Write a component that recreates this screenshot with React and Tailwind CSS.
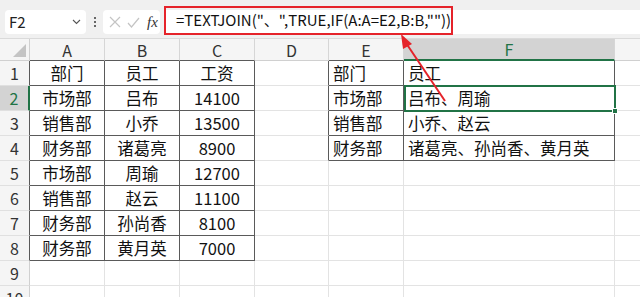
import React from 'react';

const FONT = { fontFamily: '"Noto Sans CJK SC", "Noto Sans", sans-serif' };

const cols = [
  { key: 'A', w: 'w-[75px]' },
  { key: 'B', w: 'w-[75px]' },
  { key: 'C', w: 'w-[75px]' },
  { key: 'D', w: 'w-[74px]' },
  { key: 'E', w: 'w-[75px]' },
  { key: 'F', w: 'w-[211px]' },
  { key: 'G', w: 'flex-1' },
];

// sheet contents, row -> column -> value
const data = {
  1: { A: '部门', B: '员工', C: '工资', E: '部门', F: '员工' },
  2: { A: '市场部', B: '吕布', C: '14100', E: '市场部', F: '吕布、周瑜' },
  3: { A: '销售部', B: '小乔', C: '13500', E: '销售部', F: '小乔、赵云' },
  4: { A: '财务部', B: '诸葛亮', C: '8900', E: '财务部', F: '诸葛亮、孙尚香、黄月英' },
  5: { A: '市场部', B: '周瑜', C: '12700' },
  6: { A: '销售部', B: '赵云', C: '11100' },
  7: { A: '财务部', B: '孙尚香', C: '8100' },
  8: { A: '财务部', B: '黄月英', C: '7000' },
  9: {},
  10: {},
};

const inTable = (r, c) =>
  (r <= 8 && ['A', 'B', 'C'].includes(c)) || (r <= 4 && ['E', 'F'].includes(c));

function Cell({ r, c, w }) {
  const value = data[r][c];
  const own = inTable(r, c);
  const rightDark = own || (c === 'D' && r <= 4);
  const centered = ['A', 'B', 'C'].includes(c);
  return (
    <div
      className={[
        w,
        'h-full flex items-center border-b text-[16.5px] text-[#111] whitespace-nowrap overflow-hidden',
        own ? 'border-b-[#5a5a5a]' : 'border-b-[#e3e3e3]',
        c === 'G' ? '' : 'border-r',
        rightDark ? 'border-r-[#5a5a5a]' : 'border-r-[#e3e3e3]',
        centered ? 'justify-center' : 'pl-[4px]',
      ].join(' ')}
    >
      {value}
    </div>
  );
}

function Toolbar() {
  return (
    <div className="h-[39px] bg-[#f0f0f0] border-b border-[#dadada] flex items-start pt-[10px] relative">
      <div className="ml-[5px] w-[81px] h-[24px] bg-white rounded-[4px] flex items-center justify-between px-[4px]">
        <span className="text-[15px] text-[#222]">F2</span>
        <svg width="9" height="6" viewBox="0 0 9 6" className="mr-[1px]">
          <path d="M1 1 L4.5 4.5 L8 1" fill="none" stroke="#555" strokeWidth="1.1" />
        </svg>
      </div>
      <div className="w-[17px] h-[24px] flex flex-col items-center justify-center gap-[2px]">
        <div className="w-[2px] h-[2px] bg-[#666]" />
        <div className="w-[2px] h-[2px] bg-[#666]" />
        <div className="w-[2px] h-[2px] bg-[#666]" />
      </div>
      <div className="w-[57px] h-[24px] bg-white rounded-[4px] flex items-center pl-[6px] gap-[6px]">
        <svg width="12" height="12" viewBox="0 0 12 12">
          <path d="M1 1 L11 11 M11 1 L1 11" stroke="#c4c4c4" strokeWidth="1.2" />
        </svg>
        <svg width="13" height="11" viewBox="0 0 13 11">
          <path d="M1 6 L4.5 10 L12 1" fill="none" stroke="#c4c4c4" strokeWidth="1.2" />
        </svg>
        <span className="text-[15px] italic text-[#333] ml-[1px]" style={{ fontFamily: '"Liberation Serif", serif' }}>
          fx
        </span>
      </div>
      <div className="ml-[5px] flex-1 h-[24px] bg-white" />
      {/* red highlight around the formula */}
      <div className="absolute left-[164px] top-[6px] w-[289px] h-[29px] border-2 border-[#e5232a] flex items-center pl-[10px]">
        <span className="text-[15px] text-[#111] whitespace-nowrap">=TEXTJOIN("、",TRUE,IF(A:A=E2,B:B,""))</span>
      </div>
    </div>
  );
}

function ColumnHeader() {
  return (
    <div className="h-[22px] flex bg-[#f5f5f5]">
      <div className="w-[30px] h-full border-r border-b border-[#d0d0d0] relative">
        <svg width="30" height="22" viewBox="0 0 30 22" className="absolute left-0 top-0">
          <path d="M13 18 L26 18 L26 5 Z" fill="#c4c4c4" />
        </svg>
      </div>
      {cols.map(({ key, w }) => {
        const sel = key === 'F';
        const dark = ['A', 'B', 'C', 'E'].includes(key);
        return (
          <div
            key={key}
            className={[
              w,
              'h-full flex items-center justify-center text-[16px]',
              key === 'G' ? '' : 'border-r border-r-[#d6d6d6]',
              sel
                ? 'bg-[#d3d3d3] text-[#217346] border-b-2 border-b-[#217346]'
                : dark
                ? 'text-[#333] border-b border-b-[#5a5a5a]'
                : 'text-[#333] border-b border-b-[#d0d0d0]',
            ].join(' ')}
          >
            {key === 'G' ? '' : key}
          </div>
        );
      })}
    </div>
  );
}

function Row({ r }) {
  const sel = r === 2;
  return (
    <div className="h-[25px] flex">
      <div
        className={[
          'w-[30px] h-full flex items-center justify-center text-[16px] border-b border-b-[#e0e0e0] border-r',
          sel ? 'bg-[#d3d3d3] text-[#217346] border-r-2 border-r-[#217346]' : 'bg-[#f5f5f5] text-[#333]',
          !sel && r <= 8 ? 'border-r-[#5a5a5a]' : '',
          !sel && r > 8 ? 'border-r-[#d0d0d0]' : '',
        ].join(' ')}
      >
        {r}
      </div>
      {cols.map(({ key, w }) => (
        <Cell key={key} r={r} c={key} w={w} />
      ))}
    </div>
  );
}

export default function App() {
  return (
    <div className="w-[640px] h-[297px] overflow-hidden bg-white relative" style={FONT}>
      <Toolbar />
      <ColumnHeader />
      <div>
        {Object.keys(data).map((r) => (
          <Row key={r} r={Number(r)} />
        ))}
      </div>

      {/* active cell F2 */}
      <div className="absolute left-[404px] top-[85px] w-[212px] h-[27px] border-2 border-[#217346] pointer-events-none">
        <div className="absolute right-[-4px] bottom-[-4px] w-[6px] h-[6px] bg-[#217346] border border-white" />
      </div>

      {/* red arrow pointing at the formula */}
      <svg className="absolute left-0 top-0 pointer-events-none" width="640" height="297" viewBox="0 0 640 297">
        <line x1="445" y1="101" x2="406" y2="43" stroke="#e5232a" strokeWidth="2" />
        <path d="M401 34 L412 44 L403 49 Z" fill="#e5232a" />
      </svg>
    </div>
  );
}
